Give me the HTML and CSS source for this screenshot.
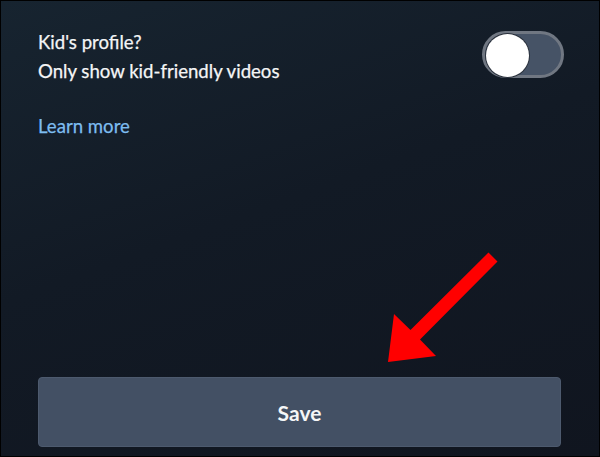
FILE: index.html
```html
<!DOCTYPE html>
<html lang="en">
<head>
  <meta charset="UTF-8" />
  <title>Edit profile</title>
  <link rel="stylesheet" href="styles.css">
</head>
<body>
  <div class="screen">
    <!-- kid's profile row -->
    <div class="setting-row">
      <div class="setting-text">
        <div>Kid's profile?</div>
        <div>Only show kid-friendly videos</div>
      </div>
      <div class="toggle">
        <span class="knob"></span>
      </div>
    </div>

    <a href="#" class="learn-more">Learn more</a>

    <div class="spacer"></div>

    <button class="save-button">Save</button>

    <!-- annotation arrow -->
    <svg class="arrow" width="600" height="457" viewBox="0 0 600 457">
      <polygon fill="#ff0000" points="488.5,252.5 497.5,261.5 420,339.5 436,356 388,362 394,314 410.5,330" />
    </svg>
  </div>
</body>
</html>
```

FILE: styles.css
```css
  body {
    margin: 0;
    font-family: Lato, 'Noto Sans', sans-serif;
    background: #000;
  }

  .screen {
    position: relative;
    box-sizing: border-box;
    width: 600px;
    height: 457px;
    border: 1px solid #000;
    background: linear-gradient(160deg, #172430 0%, #121a25 45%, #10151f 100%);
    display: flex;
    flex-direction: column;
    padding: 27px 38px 9px 37px;
  }

  .setting-row {
    display: flex;
    justify-content: space-between;
    align-items: flex-start;
  }

  .setting-text {
    color: #f4f5f6;
    font-size: 18.6px;
    line-height: 29px;
    -webkit-text-stroke: 0.25px #f4f5f6;
  }

  /* 開關 */
  .toggle {
    box-sizing: border-box;
    width: 82px;
    height: 47px;
    margin-top: 3px;
    margin-right: -3px;
    border: 3px solid #707782;
    border-radius: 24px;
    background: #465366;
    padding: 1px;
  }

  .knob {
    display: block;
    width: 43px;
    height: 43px;
    margin-top: -1px;
    border-radius: 50%;
    background: #fff;
    box-shadow: 0 0 0 1px #2a313c;
  }

  .learn-more {
    margin-top: 26px;
    align-self: flex-start;
    color: #7dbdf0;
    font-size: 18.6px;
    line-height: 29px;
    text-decoration: none;
    -webkit-text-stroke: 0.25px #7dbdf0;
  }

  .spacer {
    flex: 1;
  }

  .save-button {
    height: 70px;
    margin-right: 0;
    border: 1px solid #4d5a6e;
    border-radius: 4px;
    background: #435064;
    color: #f5f6f7;
    font-family: Lato, 'Noto Sans', sans-serif;
    font-weight: 700;
    font-size: 21px;
  }

  .arrow {
    position: absolute;
    top: -1px;
    left: -1px;
  }
```
